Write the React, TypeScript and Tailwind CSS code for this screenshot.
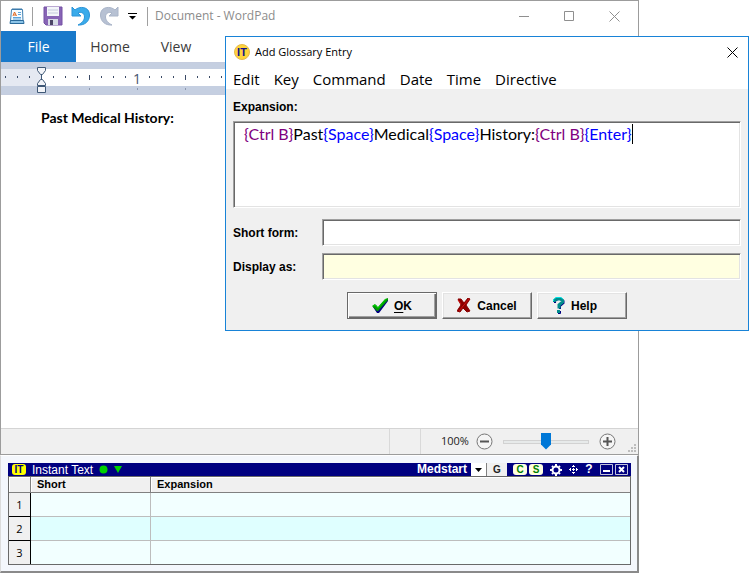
import type { ReactNode } from "react";

const ui = "font-['Open_Sans','Noto_Sans',sans-serif]";
const arial = "font-['Liberation_Sans',Arial,sans-serif]";
const lato = "font-['Lato',sans-serif]";

const sunken =
  "border border-t-[#a0a0a0] border-l-[#a0a0a0] border-r-white border-b-white shadow-[inset_1px_1px_0_#696969,inset_-1px_-1px_0_#e3e3e3]";
const raised =
  "border border-t-white border-l-white border-r-[#696969] border-b-[#696969] shadow-[inset_-1px_-1px_0_#a0a0a0,inset_1px_1px_0_#e3e3e3]";

function Divider() {
  return <span className="h-[19px] w-px bg-[#a0a0a0]" />;
}

function PageIcon() {
  return (
    <svg width="16" height="18" viewBox="0 0 16 18" aria-hidden="true">
      <path d="M2.500 2.500H13.500L14 14H1.500Z" fill="#f6fbff" stroke="#3f7fb0" />
      <path d="M1.500 13.500H14.500L15 16.500H1Z" fill="#8cc4e8" stroke="#2b6b9c" />
      <path d="M4 1V3M6 1V3M8 1V3M10 1V3M12 1V3" stroke="#3b78a8" />
      <path d="M4 9L5.500 5L7.500 9M5 8H7" fill="none" stroke="#e2651b" />
      <path d="M9 5.500H12M9 7.500H12M4 10.500H12M4 12H12" stroke="#5aa3da" />
    </svg>
  );
}

function SaveIcon() {
  return (
    <svg width="20" height="20" viewBox="0 0 20 20" aria-hidden="true">
      <path d="M1 1H19V19H3L1 17Z" fill="#8764b5" stroke="#7450a4" />
      <path d="M4 1H16V10H4Z" fill="#f3f5fa" />
      <path d="M5 4H15M5 7H15" stroke="#c5cbdc" />
      <path d="M5 13H15V19H5Z" fill="#d6dbe6" />
      <path d="M7 14H10V19H7Z" fill="#4b4566" />
    </svg>
  );
}

function UndoIcon({ redo = false }: { redo?: boolean }) {
  return (
    <svg width="20" height="20" viewBox="0 0 20 20" aria-hidden="true" className={redo ? "-scale-x-100" : ""}>
      <path
        d="M1 1L4 4C8 0 18.500 0 18.500 9C18.500 16 13 19.500 7 19C11 17 13.500 14 13.500 11C13.500 7 10 5.500 7 7L10 10H1Z"
        fill={redo ? "#b7c1d3" : "#3aabea"}
        stroke={redo ? "#a9b4c8" : "#2a93d8"}
      />
    </svg>
  );
}

function Ruler() {
  const ticks = Array.from({ length: 19 }, (_, i) => i - 3).filter((i) => i !== 0 && i < 16);
  return (
    <div className="h-[33px] overflow-hidden border-y border-[#c5cddf] bg-[#c5cfe1]">
      <div className="h-[31px] bg-linear-to-b from-[#c5cfe1] from-[6px] via-white via-[6px] to-white">
        <svg width="100%" height="31" className="block" aria-label="Ruler">
          <rect x="0" y="6" width="40" height="17" fill="#e5e9f2" />
          <rect x="0" y="23" width="100%" height="8" fill="#c5cfe1" />
          {ticks.map((i) => {
            const x = 40 + i * 12;
            if (i > 0 && i % 8 === 0) {
              return (
                <g key={i}>
                  <text x={x} y="21" textAnchor="middle" fontSize="14" fill="#44546f" className={ui}>
                    {i / 8}
                  </text>
                  <rect x={x} y="25" width="1" height="2" fill="#8b97ae" />
                </g>
              );
            }
            if (i > 0 && i % 4 === 0) {
              return (
                <g key={i}>
                  <rect x={x} y="12" width="1" height="5" fill="#3a4a66" />
                  <rect x={x} y="25" width="1" height="2" fill="#8b97ae" />
                </g>
              );
            }
            return <rect key={i} x={x} y="13" width="1" height="2" fill="#3a4a66" />;
          })}
          <g fill="#f2f4f8" stroke="#3f5876">
            <path d="M36.500 4.500H44.500V7.500L41.500 11.500H39.500L36.500 7.500Z" />
            <path d="M40.500 12V16" />
            <path d="M36.500 22.500V20.500L39.500 16.500H41.500L44.500 20.500V22.500Z" />
            <path d="M36.500 23.500H44.500V29.500H36.500Z" />
          </g>
        </svg>
      </div>
    </div>
  );
}

function ZoomSymbol({ plus = false }: { plus?: boolean }) {
  return (
    <svg width="17" height="17" viewBox="0 0 17 17" className="block">
      <circle cx="8.500" cy="8.500" r="7.500" fill="#f5f5f5" stroke="#777" />
      <path d={plus ? "M4 8.500H13M8.500 4V13" : "M4 8.500H13"} stroke="#555" strokeWidth="2" />
    </svg>
  );
}

function WordPad() {
  return (
    <section className="flex flex-col border border-[#9c9c9c] bg-white" aria-label="Document - WordPad">
      <header className={`flex h-[30px] items-center text-xs text-[#8c8c8c] ${ui}`}>
        <div className="flex items-center pl-2">
          <PageIcon />
          <span className="ml-[7px] mr-[10px] flex">
            <Divider />
          </span>
          <button aria-label="Save"><SaveIcon /></button>
          <button aria-label="Undo" className="ml-2"><UndoIcon /></button>
          <button aria-label="Redo" className="ml-2"><UndoIcon redo /></button>
          <button aria-label="Customize toolbar" className="ml-[9px]">
            <svg width="9" height="7" viewBox="0 0 9 7"><path d="M0 0H9V1H0ZM1 3H8L4.500 6.500Z" fill="#000" /></svg>
          </button>
          <span className="ml-[10px] mr-[7px] flex">
            <Divider />
          </span>
        </div>
        <h1>Document - WordPad</h1>
        <div className="ml-auto flex items-center gap-[35px] pr-[18px]">
          <button aria-label="Minimize">
            <svg width="10" height="10"><path d="M0 5.500H10" stroke="#8f8f8f" /></svg>
          </button>
          <button aria-label="Maximize">
            <svg width="10" height="10"><path d="M.5 .5H9.500V9.500H.5Z" fill="none" stroke="#8f8f8f" /></svg>
          </button>
          <button aria-label="Close">
            <svg width="11" height="11"><path d="M.5 .5L10.500 10.500M10.500 .5L.5 10.500" stroke="#8f8f8f" /></svg>
          </button>
        </div>
      </header>
      <nav className={`flex h-[31px] text-sm text-[#3b3b3b] ${ui}`}>
        <button className="w-[75px] bg-[#1979ca] text-white">File</button>
        <button className="w-[68px]">Home</button>
        <button className="w-16">View</button>
      </nav>
      <Ruler />
      <main className={`h-[333px] px-10 pt-[13px] text-sm leading-5 font-bold text-black ${lato}`}>
        <p>Past Medical History:</p>
      </main>
      <footer className={`flex h-[26px] items-center border-t border-[#d4d4d4] bg-[#f0f0f0] text-xs text-[#222] ${ui}`}>
        <div className="ml-auto flex h-full w-8 border-x border-[#d9d9d9]" />
        <label htmlFor="zoom" className="ml-5 w-[30px] text-[11px]">100%</label>
        <button aria-label="Zoom out" className="ml-[5px]"><ZoomSymbol /></button>
        <input
          id="zoom"
          type="range"
          min="0"
          max="100"
          defaultValue="50"
          className="mx-[10px] h-5 w-[86px] appearance-none bg-transparent [&::-webkit-slider-runnable-track]:h-1 [&::-webkit-slider-runnable-track]:border [&::-webkit-slider-runnable-track]:border-[#d2d2d2] [&::-webkit-slider-runnable-track]:bg-[#e7eaea] [&::-webkit-slider-thumb]:-mt-2 [&::-webkit-slider-thumb]:h-[17px] [&::-webkit-slider-thumb]:w-[10px] [&::-webkit-slider-thumb]:appearance-none [&::-webkit-slider-thumb]:bg-[#0078d7] [&::-webkit-slider-thumb]:[clip-path:polygon(0_0,100%_0,100%_70%,50%_100%,0_70%)]"
        />
        <button aria-label="Zoom in"><ZoomSymbol plus /></button>
        <svg width="9" height="9" className="mr-px mb-px ml-3 self-end" aria-hidden="true">
          <path d="M6 0h2v2h-2ZM3 3h2v2h-2ZM6 3h2v2h-2ZM0 6h2v2h-2ZM3 6h2v2h-2ZM6 6h2v2h-2Z" fill="#bdbdbd" />
        </svg>
      </footer>
    </section>
  );
}

function Token({ kind, children }: { kind: "key" | "command"; children: ReactNode }) {
  return <span className={kind === "key" ? "text-[#0000ff]" : "text-[#800080]"}>{children}</span>;
}

function GlossaryDialog() {
  const menu = ["Edit", "Key", "Command", "Date", "Time", "Directive"];
  return (
    <section
      role="dialog"
      aria-label="Add Glossary Entry"
      className="absolute top-9 right-0 left-[225px] border border-[#1883d7] bg-[#f0f0f0] text-black"
    >
      <header className={`flex h-[30px] items-center bg-white pr-[10px] pl-2 text-[11px] ${ui}`}>
        <svg width="16" height="16" viewBox="0 0 16 16" className={arial} aria-hidden="true">
          <circle cx="8" cy="8" r="7.500" fill="#ffd43c" stroke="#e5b94c" />
          <text x="8" y="12" textAnchor="middle" fontSize="11" fontWeight="bold" fill="#10108a">IT</text>
        </svg>
        <h2 className="ml-[5px]">Add Glossary Entry</h2>
        <button aria-label="Close" className="ml-auto">
          <svg width="11" height="11"><path d="M.5 .5L10.500 10.500M10.500 .5L.5 10.500" stroke="#000" /></svg>
        </button>
      </header>
      <nav className={`flex h-[22px] items-end gap-[14px] bg-white pl-[7px] text-[15px] leading-5 ${ui}`}>
        {menu.map((m) => (
          <button key={m}>{m}</button>
        ))}
      </nav>
      <form className={`px-[7px] pt-[9px] pb-[11px] text-xs font-bold ${arial}`}>
        <div id="expansion-label" className="mb-[5px] leading-[18px]">Expansion:</div>
        <div
          role="textbox"
          aria-labelledby="expansion-label"
          contentEditable
          suppressContentEditableWarning
          className={`flex h-[87px] items-start bg-white px-[10px] pt-[2px] text-base leading-5 font-normal whitespace-pre ${lato} ${sunken}`}
        >
          <Token kind="command">{"{Ctrl B}"}</Token>Past<Token kind="key">{"{Space}"}</Token>Medical
          <Token kind="key">{"{Space}"}</Token>History:<Token kind="command">{"{Ctrl B}"}</Token>
          <Token kind="key">{"{Enter}"}</Token>
          <span className="h-5 w-px bg-black" />
        </div>
        <div className="mt-[11px] grid grid-cols-[89px_1fr] items-center gap-y-[7px]">
          <label htmlFor="short-form">Short form:</label>
          <input id="short-form" className={`h-[27px] min-w-0 bg-white px-1 ${sunken}`} />
          <label htmlFor="display-as">Display as:</label>
          <input id="display-as" className={`h-[27px] min-w-0 bg-[#ffffe1] px-1 ${sunken}`} />
        </div>
        <div className="mt-3 flex justify-center gap-[5px]">
          <button
            type="button"
            className="flex h-[27px] w-[90px] items-center justify-center gap-[5px] border border-[#696969] shadow-[inset_1px_1px_0_#fff,inset_-1px_-1px_0_#696969,inset_-2px_-2px_0_#a0a0a0]"
          >
            <svg width="17" height="16" viewBox="0 0 17 16" aria-hidden="true">
              <path d="M1 9L4 7L6 10L14 1H16L16 3L7 15H5Z" fill="#000080" />
              <path d="M0 8L3 6L6 9L13 1L16 0V2L6 13H5Z" fill="#009c00" />
              <path d="M1 8L3 7L6 10L14 1" fill="none" stroke="#00d800" />
            </svg>
            <span><span className="underline underline-offset-2">O</span>K</span>
          </button>
          <button type="button" className={`flex h-[27px] w-[90px] items-center justify-center gap-[6px] ${raised}`}>
            <svg width="14" height="15" viewBox="0 0 14 15" aria-hidden="true">
              <path d="M1 1H4L7 5L11 0L13 1L9 7L13 13L10 14L6 10L3 14L0 13L4 7Z" fill="#8c0000" stroke="#8c0000" />
              <path d="M1 2L4 6M12 1L7 7L2 13" fill="none" stroke="#d01010" />
            </svg>
            Cancel
          </button>
          <button type="button" className={`flex h-[27px] w-[90px] items-center gap-[6px] pl-[15px] ${raised}`}>
            <svg width="12" height="17" viewBox="0 0 12 17" aria-hidden="true">
              <path d="M2 6V4L5 2H8L10.500 4V6L7 9V12" fill="none" stroke="#000080" strokeWidth="2" />
              <path d="M1.500 5V3.500L3.500 2H7.500L9.500 3.500V5L6 8V11.500" fill="none" stroke="#008c8c" strokeWidth="3" />
              <path d="M.5 4V2.500L3 .5H8L10 2" fill="none" stroke="#00e0e0" />
              <path d="M4 13H7V16H4Z" fill="#008c8c" />
              <path d="M5 16.500H7.500V14" fill="none" stroke="#000080" />
            </svg>
            Help
          </button>
        </div>
      </form>
    </section>
  );
}

function Badge({ children }: { children: ReactNode }) {
  return (
    <button className="h-[11px] w-[14px] rounded-[3px] bg-[#ffffe1] text-center text-[10px] leading-[11px] font-bold text-[#008000]">
      {children}
    </button>
  );
}

function InstantText() {
  const th = "h-4 border-r border-b border-[#808080] pl-[6px] text-left text-[11px] leading-[15px] font-bold shadow-[inset_1px_1px_0_#fff]";
  return (
    <section
      aria-label="Instant Text"
      className={`border-t border-r-2 border-b-2 border-l border-t-white border-r-[#8a8a8a] border-b-[#8a8a8a] border-l-[#dcdcdc] bg-[#f4f7fc] pt-[7px] pr-[6px] pb-[6px] pl-[7px] ${arial}`}
    >
      <header className="flex h-[13px] items-center bg-[#000080] text-xs text-white">
        <span className="ml-1 flex h-[11px] w-[14px] items-center justify-center rounded-[3px] bg-[#ffff00] text-[10px] leading-[11px] font-bold text-[#000080]">
          IT
        </span>
        <h2 className="ml-[6px]">Instant Text</h2>
        <svg width="24" height="9" className="ml-[6px]" aria-hidden="true">
          <circle cx="4.500" cy="4.500" r="4" fill="#00d000" />
          <path d="M15 1H23L19 8Z" fill="#00d000" />
        </svg>
        <div className="relative ml-auto flex h-[13px]">
          <select
            aria-label="Glossary"
            className="h-[13px] w-[69px] appearance-none bg-[#000080] text-xs leading-[13px] font-bold text-white"
          >
            <option>Medstart</option>
          </select>
          <span className="pointer-events-none absolute right-0 flex h-[13px] w-[15px] items-center justify-center bg-white">
            <svg width="7" height="4"><path d="M0 0H7L3.500 4Z" fill="#000" /></svg>
          </span>
        </div>
        <button className="h-[13px] w-[21px] border-l border-[#808080] bg-[#f0f0f0] text-[10px] leading-[13px] font-bold text-[#222]">G</button>
        <div className="ml-[6px] flex items-center gap-[2px]">
          <Badge>C</Badge>
          <Badge>S</Badge>
        </div>
        <button aria-label="Settings" className="ml-[7px]">
          <svg width="12" height="12" viewBox="0 0 12 12" className="block">
            <circle cx="6" cy="6" r="3.500" fill="none" stroke="#fff" strokeWidth="2" />
            <path d="M6 0V2M6 10V12M0 6H2M10 6H12M2 2L3 3M9 9L10 10M10 2L9 3M3 9L2 10" stroke="#fff" strokeWidth="2" />
          </svg>
        </button>
        <button aria-label="Move" className="ml-[7px]">
          <svg width="9" height="9" viewBox="0 0 9 9" className="block" fill="#fff" shapeRendering="crispEdges">
            <path d="M4 0H5V1H6V2H3V1H4ZM3 7H6V8H5V9H4V8H3ZM0 4H1V3H2V6H1V5H0ZM7 3H8V4H9V5H8V6H7ZM4 3H5V4H6V5H5V6H4V5H3V4H4Z" />
          </svg>
        </button>
        <button aria-label="Help" className="ml-[7px] w-2 text-xs leading-[13px] font-bold">?</button>
        <button aria-label="Minimize" className="ml-[7px]">
          <svg width="13" height="11" className="block"><path d="M.5 .5H12.500V10.500H.5Z" fill="none" stroke="#c4c4dc" /><path d="M3 7H10" stroke="#fff" strokeWidth="2" /></svg>
        </button>
        <button aria-label="Close" className="mr-[3px] ml-[2px]">
          <svg width="13" height="11" className="block"><path d="M.5 .5H12.500V10.500H.5Z" fill="none" stroke="#c4c4dc" /><path d="M4 3L9 8M9 3L4 8" stroke="#fff" strokeWidth="2" /></svg>
        </button>
      </header>
      <table className="w-full table-fixed border-separate border-spacing-0 border border-[#696969] bg-[#f0f0f0] text-black">
        <colgroup>
          <col className="w-[22px]" />
          <col className="w-[120px]" />
          <col />
        </colgroup>
        <thead>
          <tr>
            <th className={th} aria-label="Row" />
            <th className={th}>Short</th>
            <th className={`${th} border-r-0`}>Expansion</th>
          </tr>
        </thead>
        <tbody>
          {[1, 2, 3].map((n) => (
            <tr key={n} className="group">
              <th className={`h-6 border-r border-b border-black p-0 text-[11px] leading-4 font-normal group-last:h-[23px] group-last:border-b-0 ${ui}`}>{n}</th>
              <td className="border-r border-b border-[#bdbdbd] bg-[#f2ffff] p-0 group-even:bg-[#dfffff] group-last:border-b-0" />
              <td className="border-b border-[#bdbdbd] bg-[#f2ffff] p-0 group-even:bg-[#dfffff] group-last:border-b-0" />
            </tr>
          ))}
        </tbody>
      </table>
    </section>
  );
}

export default function App() {
  return (
    <div className="relative min-h-screen bg-white">
      <div className="mr-[110px]">
        <WordPad />
        <InstantText />
      </div>
      <GlossaryDialog />
    </div>
  );
}
